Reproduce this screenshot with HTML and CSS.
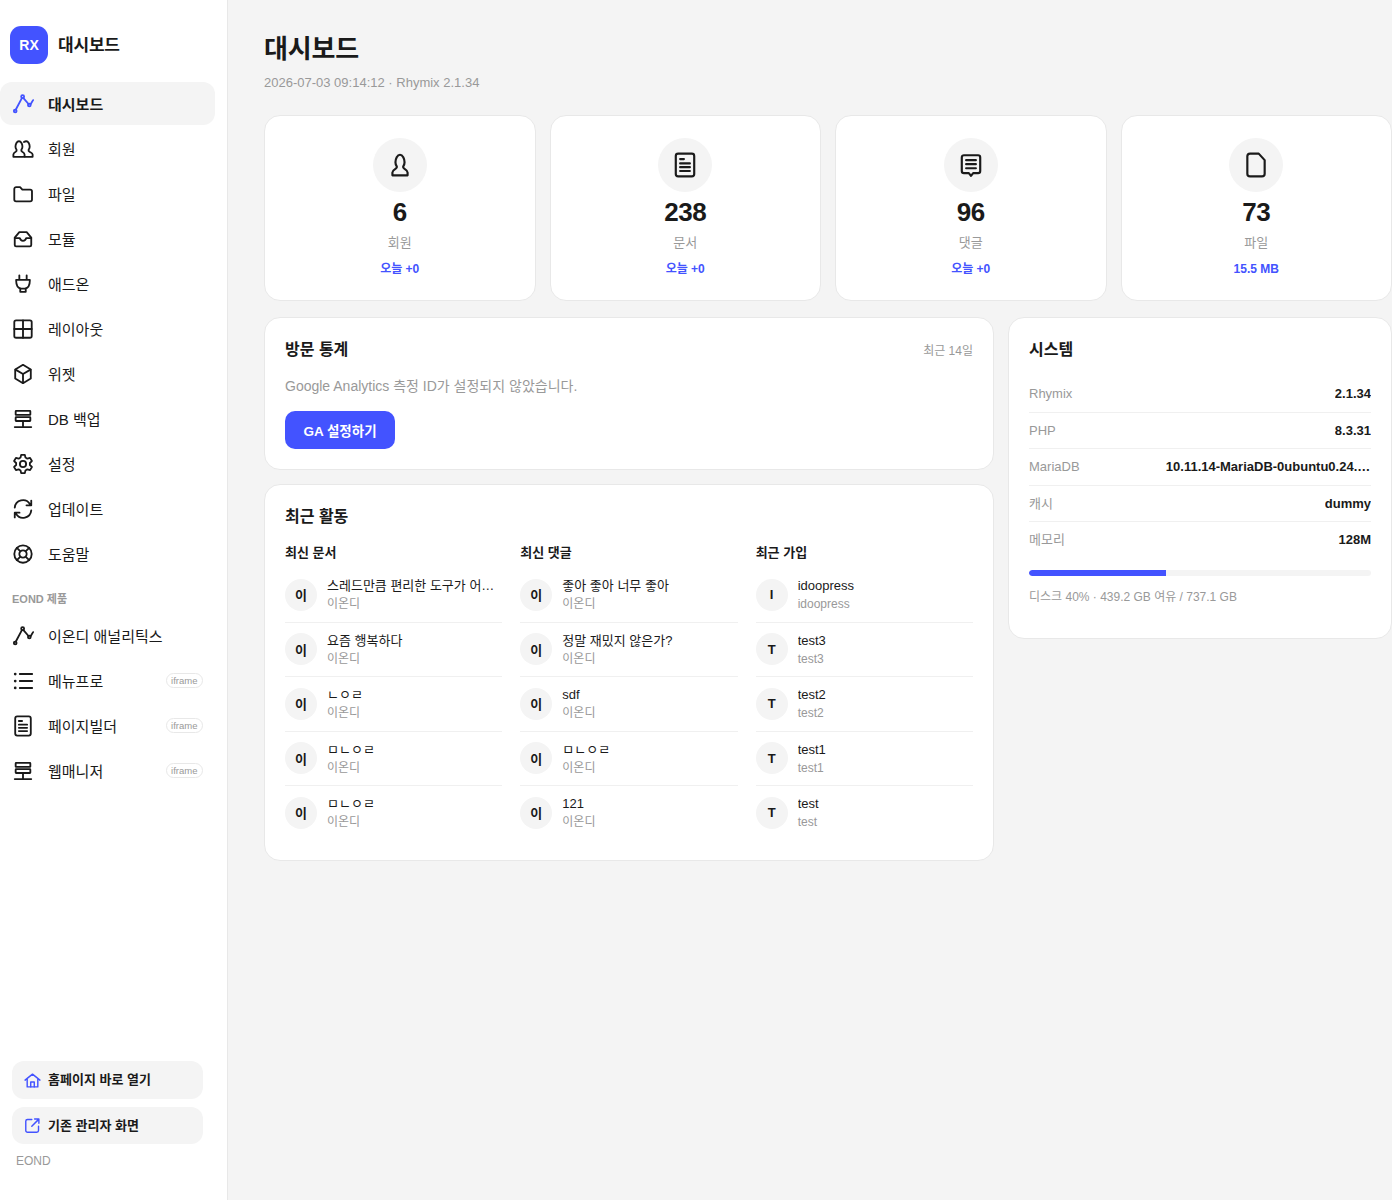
FILE: index.html
```html
<!DOCTYPE html>
<html lang="ko">
<head>
<meta charset="utf-8">
<title>대시보드</title>
<link rel="stylesheet" href="styles.css">
</head>
<body>
<svg class="defs" width="0" height="0" aria-hidden="true">
  <symbol id="i-analytics" viewBox="0 0 24 24"><path d="M4.200 18 10.800 5.600M12.500 5.500l5.300 6.200M20.300 12.300 23 7.800"/><circle cx="3.500" cy="19.600" r="1.500"/><circle cx="11.600" cy="4" r="1.600"/><circle cx="18.900" cy="13.100" r="1.500"/></symbol>
  <symbol id="i-users" viewBox="0 0 24 24"><path d="M1.500 20.500V18c0-1.500 1-2.100 2.500-3 1-.7 1.300-1.300 1-2.200-.6-.8-1.200-1.800-1.200-3.300C3.800 6.800 5.300 3.500 7.600 3.500s3.800 3.300 3.800 6c0 1.500-.6 2.500-1.200 3.300-.3.900 0 1.500 1 2.200 1.500.9 2.500 1.500 2.500 3v2.500Z"/><path d="M13 4.300c.8-.5 1.500-.8 2.500-.8 2.300 0 3.800 3.300 3.800 6 0 1.500-.6 2.500-1.200 3.300-.3.900 0 1.500 1 2.200 1.500.9 3.400 1.500 3.400 3v2.500h-8.300"/></symbol>
  <symbol id="i-folder" viewBox="0 0 24 24"><path d="M2.500 6.500A2 2 0 0 1 4.500 4.500h4.300l2.500 2.700h8.500a2 2 0 0 1 2 2V18a2 2 0 0 1-2 2H4.500a2 2 0 0 1-2-2Z"/></symbol>
  <symbol id="i-inbox" viewBox="0 0 24 24"><path d="M3 10.500 8 4.500h8l5 6v8a1.500 1.500 0 0 1-1.500 1.500h-15A1.500 1.500 0 0 1 3 18.500Z"/><path d="M3 11h5.500c.5 2 1.800 3 3.500 3s3-1 3.500-3H21"/></symbol>
  <symbol id="i-plug" viewBox="0 0 24 24"><path d="M8 2.500v5M16 2.500v5M4.500 7.500h15c0 5-1.500 9-5.500 9.500h-4C6 16.500 4.500 12.500 4.500 7.500ZM9 17v3.500h6V17"/></symbol>
  <symbol id="i-grid" viewBox="0 0 24 24"><rect x="2.500" y="2.500" width="19" height="19" rx="2"/><path d="M12 2.500v19M2.500 12h19"/></symbol>
  <symbol id="i-cube" viewBox="0 0 24 24"><path d="M12 2 20.500 7v10L12 22 3.500 17V7Z"/><path d="M3.800 7.200 12 12l8.200-4.800M12 12v9.500"/></symbol>
  <symbol id="i-stack" viewBox="0 0 24 24"><rect x="4" y="3.200" width="16" height="4.300" rx=".5"/><rect x="4" y="10" width="16" height="4.200" rx=".5"/><path d="M12 14.200v6.600M3 20.800h18"/></symbol>
  <symbol id="i-gear" viewBox="0 0 24 24"><circle cx="12" cy="12" r="3.400"/><path d="M10 2h4l.7 3 2 1.200 3-.9 2 3.500-2.200 2.100v2.200l2.200 2.100-2 3.500-3-.9-2 1.200-.7 3h-4l-.7-3-2-1.200-3 .9-2-3.500 2.200-2.100v-2.200L2.300 8.800l2-3.500 3 .9 2-1.200Z"/></symbol>
  <symbol id="i-refresh" viewBox="0 0 24 24"><path d="M3 10.500A9 9 0 0 1 19.500 6.500L21 8M21 2.800V8h-5.200"/><path d="M21 13.500A9 9 0 0 1 4.500 17.500L3 16M3 21.200V16h5.200"/></symbol>
  <symbol id="i-buoy" viewBox="0 0 24 24"><circle cx="12" cy="12" r="9.500"/><circle cx="12" cy="12" r="4"/><path d="m5.300 5.300 3.900 3.900M18.700 5.300l-3.900 3.900M5.300 18.700l3.900-3.900M18.700 18.700l-3.900-3.900"/></symbol>
  <symbol id="i-list" viewBox="0 0 24 24"><path d="M8.500 4.400H22M8.500 12H22M8.500 19.600H22"/><path stroke-width="3" d="M3.500 4.400h.01M3.500 12h.01M3.500 19.600h.01"/></symbol>
  <symbol id="i-doc" viewBox="0 0 24 24"><rect x="3.500" y="1.500" width="17" height="21" rx="2.200"/><path d="M7.500 6.500h3.500M7.500 10.500h9M7.500 14h9M7.500 17.500h9"/></symbol>
  <symbol id="i-person" viewBox="0 0 24 24"><path d="M5 21.500V19c0-1.500 1-2.300 2.500-3.200 1.300-.8 1.900-1.300 1.500-2.500-.7-1-1.200-2.200-1.200-3.800C7.800 6.500 9.500 2.500 12 2.500s4.200 4 4.200 7c0 1.600-.5 2.800-1.200 3.800-.4 1.200.2 1.700 1.500 2.500 1.500.9 2.500 1.700 2.500 3.200v2.500Z"/></symbol>
  <symbol id="i-chat" viewBox="0 0 24 24"><path d="M5.500 3h13a2 2 0 0 1 2 2v12.500a2 2 0 0 1-2 2H14l-2 2.500-2-2.500H5.500a2 2 0 0 1-2-2V5a2 2 0 0 1 2-2Z"/><path d="M7.500 7.500h9M7.500 11.200h9M7.500 15h9"/></symbol>
  <symbol id="i-file" viewBox="0 0 24 24"><path d="M6.500 1.500h8L20 7.500V20a2.500 2.500 0 0 1-2.500 2.500h-11A2.500 2.500 0 0 1 4 20V4a2.500 2.500 0 0 1 2.500-2.500Z"/></symbol>
  <symbol id="i-home" viewBox="0 0 24 24"><path d="M1.500 11.500 12 3l10.500 8.500M4.500 9.500V21h15V9.500"/><path d="M9.500 21v-7h5v7"/></symbol>
  <symbol id="i-external" viewBox="0 0 24 24"><path d="M11 3.500H5a2.500 2.500 0 0 0-2.500 2.500v13A2.500 2.500 0 0 0 5 21.500h13a2.500 2.500 0 0 0 2.500-2.500v-6"/><path d="M11 13 21 3M15 2.800h6v6"/></symbol>
</svg>
<div class="app">
  <aside class="sidebar">
    <div class="brand"><span class="logo">RX</span><span class="brand-name">대시보드</span></div>
    <nav class="nav">
      <a class="nav-item active"><svg class="ico"><use href="#i-analytics"/></svg><span>대시보드</span></a>
      <a class="nav-item"><svg class="ico"><use href="#i-users"/></svg><span>회원</span></a>
      <a class="nav-item"><svg class="ico"><use href="#i-folder"/></svg><span>파일</span></a>
      <a class="nav-item"><svg class="ico"><use href="#i-inbox"/></svg><span>모듈</span></a>
      <a class="nav-item"><svg class="ico"><use href="#i-plug"/></svg><span>애드온</span></a>
      <a class="nav-item"><svg class="ico"><use href="#i-grid"/></svg><span>레이아웃</span></a>
      <a class="nav-item"><svg class="ico"><use href="#i-cube"/></svg><span>위젯</span></a>
      <a class="nav-item"><svg class="ico"><use href="#i-stack"/></svg><span>DB 백업</span></a>
      <a class="nav-item"><svg class="ico"><use href="#i-gear"/></svg><span>설정</span></a>
      <a class="nav-item"><svg class="ico"><use href="#i-refresh"/></svg><span>업데이트</span></a>
      <a class="nav-item"><svg class="ico"><use href="#i-buoy"/></svg><span>도움말</span></a>
    </nav>
    <div class="nav-label">EOND 제품</div>
    <nav class="nav">
      <a class="nav-item"><svg class="ico"><use href="#i-analytics"/></svg><span>이온디 애널리틱스</span></a>
      <a class="nav-item"><svg class="ico"><use href="#i-list"/></svg><span>메뉴프로</span><em class="badge">iframe</em></a>
      <a class="nav-item"><svg class="ico"><use href="#i-doc"/></svg><span>페이지빌더</span><em class="badge">iframe</em></a>
      <a class="nav-item"><svg class="ico"><use href="#i-stack"/></svg><span>웹매니저</span><em class="badge">iframe</em></a>
    </nav>
    <div class="side-foot">
      <a class="foot-btn"><svg class="ico-sm"><use href="#i-home"/></svg><span class="foot-text">홈페이지 바로 열기</span></a>
      <a class="foot-btn short"><svg class="ico-sm"><use href="#i-external"/></svg><span class="foot-text">기존 관리자 화면</span></a>
      <div class="foot-note">EOND</div>
    </div>
  </aside>
  <main class="main">
    <h1 class="page-title">대시보드</h1>
    <p class="page-sub">2026-07-03 09:14:12 · Rhymix 2.1.34</p>
    <section class="stats">
      <div class="card stat"><span class="stat-ico"><svg class="ico-lg"><use href="#i-person"/></svg></span><strong class="stat-num">6</strong><span class="stat-label">회원</span><span class="stat-delta">오늘 +0</span></div>
      <div class="card stat"><span class="stat-ico"><svg class="ico-lg"><use href="#i-doc"/></svg></span><strong class="stat-num">238</strong><span class="stat-label">문서</span><span class="stat-delta">오늘 +0</span></div>
      <div class="card stat"><span class="stat-ico"><svg class="ico-lg"><use href="#i-chat"/></svg></span><strong class="stat-num">96</strong><span class="stat-label">댓글</span><span class="stat-delta">오늘 +0</span></div>
      <div class="card stat"><span class="stat-ico"><svg class="ico-lg"><use href="#i-file"/></svg></span><strong class="stat-num">73</strong><span class="stat-label">파일</span><span class="stat-delta">15.5 MB</span></div>
    </section>
    <section class="columns">
      <div class="col-left">
        <div class="card panel visits">
          <div class="panel-head"><h2 class="panel-title">방문 통계</h2><span class="panel-note">최근 14일</span></div>
          <p class="visits-text">Google Analytics 측정 ID가 설정되지 않았습니다.</p>
          <a class="primary-btn">GA 설정하기</a>
        </div>
        <div class="card panel activity">
          <h2 class="panel-title">최근 활동</h2>
          <div class="activity-grid">
            <div class="activity-col">
              <h3 class="activity-head">최신 문서</h3>
              <div class="row"><span class="avatar">이</span><div class="row-text"><div class="row-title">스레드만큼 편리한 도구가 어디 있을까요</div><div class="row-sub">이온디</div></div></div>
              <div class="row"><span class="avatar">이</span><div class="row-text"><div class="row-title">요즘 행복하다</div><div class="row-sub">이온디</div></div></div>
              <div class="row"><span class="avatar">이</span><div class="row-text"><div class="row-title">ㄴㅇㄹ</div><div class="row-sub">이온디</div></div></div>
              <div class="row"><span class="avatar">이</span><div class="row-text"><div class="row-title">ㅁㄴㅇㄹ</div><div class="row-sub">이온디</div></div></div>
              <div class="row"><span class="avatar">이</span><div class="row-text"><div class="row-title">ㅁㄴㅇㄹ</div><div class="row-sub">이온디</div></div></div>
            </div>
            <div class="activity-col">
              <h3 class="activity-head">최신 댓글</h3>
              <div class="row"><span class="avatar">이</span><div class="row-text"><div class="row-title">좋아 좋아 너무 좋아</div><div class="row-sub">이온디</div></div></div>
              <div class="row"><span class="avatar">이</span><div class="row-text"><div class="row-title">정말 재밌지 않은가?</div><div class="row-sub">이온디</div></div></div>
              <div class="row"><span class="avatar">이</span><div class="row-text"><div class="row-title">sdf</div><div class="row-sub">이온디</div></div></div>
              <div class="row"><span class="avatar">이</span><div class="row-text"><div class="row-title">ㅁㄴㅇㄹ</div><div class="row-sub">이온디</div></div></div>
              <div class="row"><span class="avatar">이</span><div class="row-text"><div class="row-title">121</div><div class="row-sub">이온디</div></div></div>
            </div>
            <div class="activity-col">
              <h3 class="activity-head">최근 가입</h3>
              <div class="row"><span class="avatar">I</span><div class="row-text"><div class="row-title">idoopress</div><div class="row-sub">idoopress</div></div></div>
              <div class="row"><span class="avatar">T</span><div class="row-text"><div class="row-title">test3</div><div class="row-sub">test3</div></div></div>
              <div class="row"><span class="avatar">T</span><div class="row-text"><div class="row-title">test2</div><div class="row-sub">test2</div></div></div>
              <div class="row"><span class="avatar">T</span><div class="row-text"><div class="row-title">test1</div><div class="row-sub">test1</div></div></div>
              <div class="row"><span class="avatar">T</span><div class="row-text"><div class="row-title">test</div><div class="row-sub">test</div></div></div>
            </div>
          </div>
        </div>
      </div>
      <div class="card panel system">
        <h2 class="panel-title">시스템</h2>
        <dl class="sys-list">
          <div class="sys-row"><dt>Rhymix</dt><dd>2.1.34</dd></div>
          <div class="sys-row"><dt>PHP</dt><dd>8.3.31</dd></div>
          <div class="sys-row"><dt>MariaDB</dt><dd>10.11.14-MariaDB-0ubuntu0.24.04.1</dd></div>
          <div class="sys-row"><dt>캐시</dt><dd>dummy</dd></div>
          <div class="sys-row"><dt>메모리</dt><dd>128M</dd></div>
        </dl>
        <div class="progress"><div class="progress-fill" style="width:40%"></div></div>
        <p class="disk">디스크 40% · 439.2 GB 여유 / 737.1 GB</p>
      </div>
    </section>
  </main>
</div>
</body>
</html>
```
FILE: styles.css
```css
* { box-sizing: border-box; }
html, body { margin: 0; padding: 0; }
body {
  font-family: "Liberation Sans", "Noto Sans CJK KR", sans-serif;
  color: #1a1a1a;
  background: #f4f4f4;
  font-size: 14px;
}
.defs { position: absolute; }
.ico, .ico-sm, .ico-lg {
  fill: none;
  stroke: currentColor;
  stroke-width: 2;
  stroke-linecap: round;
  stroke-linejoin: round;
  flex: none;
}
.ico { width: 22px; height: 22px; }
.ico-lg { width: 26px; height: 26px; }
.ico-sm { width: 17px; height: 17px; color: #4353ff; }

.app { display: flex; height: 1200px; overflow: hidden; }
.sidebar {
  width: 228px;
  flex: none;
  background: #fff;
  border-right: 1px solid #e8e8e8;
  padding: 26px 12px 0 0;
  display: flex;
  flex-direction: column;
}
.brand { display: flex; align-items: center; gap: 10px; padding-left: 10px; height: 38px; margin-bottom: 18px; }
.logo {
  width: 38px; height: 38px; border-radius: 11px;
  background: #4353ff; color: #fff;
  font-weight: 700; font-size: 14px;
  display: flex; align-items: center; justify-content: center;
}
.brand-name { font-size: 17px; font-weight: 700; margin-bottom: 4px; letter-spacing: -0.2px; }
.nav { display: flex; flex-direction: column; gap: 2px; }
.nav-item {
  height: 43px;
  display: flex;
  align-items: center;
  gap: 14px;
  padding: 0 12px;
  border-radius: 12px;
  font-size: 15px;
  color: #1a1a1a;
}
.nav-item span { flex: 1; }
.nav-item.active { background: #f4f4f4; font-weight: 700; }
.nav-item.active .ico { color: #4353ff; }
.nav-label { font-size: 11px; font-weight: 700; color: #999; padding-left: 12px; margin: 16px 0 7px; line-height: 16px; height: 16px; }
.badge {
  font-style: normal;
  font-size: 9.500px;
  color: #999;
  border: 1px solid #e8e8e8;
  border-radius: 8px;
  padding: 0 4.500px;
  line-height: 13px;
}
.side-foot { margin-top: auto; padding: 0 12px 32px; }
.foot-btn {
  display: flex; align-items: center; gap: 7px;
  height: 38px; padding: 0 12px;
  border-radius: 12px;
  background: #f4f4f4;
  font-size: 13px; font-weight: 700;
  margin-bottom: 8px;
}
.foot-btn.short { height: 37px; }
.foot-text { margin-bottom: 3px; }
.foot-btn.short .foot-text { margin-bottom: 2px; }
.foot-note { font-size: 12px; color: #999; padding-left: 4px; margin-top: 10px; line-height: 14px; }

.main { flex: 1; min-width: 0; padding: 29px 0 0 36px; }
.page-title { font-size: 26px; font-weight: 700; margin: 0; line-height: 40px; letter-spacing: -0.2px; }
.page-sub { font-size: 13px; color: #999; margin: 6px 0 0; line-height: 16px; }
.stats { display: grid; grid-template-columns: repeat(4, minmax(0, 1fr)); gap: 14px; margin-top: 24px; }
.card { background: #fff; border: 1px solid #e8e8e8; border-radius: 16px; }
.stat { height: 186px; padding-top: 22px; display: flex; flex-direction: column; align-items: center; }
.stat-ico { width: 54px; height: 54px; border-radius: 50%; background: #f4f4f4; display: flex; align-items: center; justify-content: center; }
.stat-num { font-size: 26px; font-weight: 700; line-height: 30px; margin-top: 5px; letter-spacing: -0.5px; }
.stat-label { font-size: 13px; color: #999; line-height: 18px; margin-top: 7px; }
.stat-delta { font-size: 12px; font-weight: 700; color: #4353ff; line-height: 16px; margin-top: 9px; }

.columns { display: grid; grid-template-columns: minmax(0, 1fr) 384px; gap: 14px; margin-top: 16px; align-items: start; }
.col-left { display: flex; flex-direction: column; gap: 14px; min-width: 0; }
.panel { padding: 20px; }
.panel-head { display: flex; justify-content: space-between; align-items: center; }
.panel-title { font-size: 16px; font-weight: 700; margin: 1px 0 0; line-height: 22px; }
.panel-note { font-size: 12px; color: #999; }
.visits { height: 153px; }
.visits-text { font-size: 14px; color: #999; margin: 15px 0 0; line-height: 20px; }
.primary-btn {
  display: inline-flex; align-items: center; justify-content: center;
  width: 110px; height: 38px; margin-top: 15px;
  background: #4353ff; color: #fff; border-radius: 10px;
  font-size: 13.500px; font-weight: 700;
}
.activity { padding-bottom: 19px; }
.activity-grid { display: grid; grid-template-columns: repeat(3, minmax(0, 1fr)); gap: 18px; margin-top: 15px; }
.activity-col { min-width: 0; }
.activity-head { font-size: 13px; font-weight: 700; margin: 0 0 5.200px; line-height: 20px; }
.row { display: flex; align-items: center; gap: 10px; padding: 9.250px 0; border-bottom: 1px solid #f0f0f0; }
.row:last-child { border-bottom: 1px solid transparent; }
.avatar {
  width: 32px; height: 32px; flex: none; border-radius: 50%;
  background: #f4f4f4; font-size: 13px; font-weight: 700;
  display: flex; align-items: center; justify-content: center;
}
.row-text { min-width: 0; flex: 1; }
.row-title { font-size: 13px; line-height: 17.500px; white-space: nowrap; overflow: hidden; text-overflow: ellipsis; }
.row-sub { font-size: 12px; line-height: 16px; margin-top: 1.500px; color: #999; white-space: nowrap; }

.system { height: 322px; }
.sys-list { margin: 15px 0 0; }
.sys-row {
  display: flex; justify-content: space-between; align-items: center;
  height: 36.500px; font-size: 13px; line-height: 15px;
  border-bottom: 1px solid #f0f0f0;
}
.sys-row:last-child { border-bottom-color: transparent; }
.sys-row dt { color: #999; }
.sys-row dd { margin: 0; font-weight: 700; max-width: 60%; white-space: nowrap; overflow: hidden; text-overflow: ellipsis; }
.progress { height: 6px; background: #f4f4f4; border-radius: 4px; overflow: hidden; margin-top: 11px; }
.progress-fill { height: 100%; background: #4353ff; border-radius: 4px 0 0 4px; }
.disk { font-size: 12px; color: #999; margin: 13px 0 0; line-height: 16px; }
```
